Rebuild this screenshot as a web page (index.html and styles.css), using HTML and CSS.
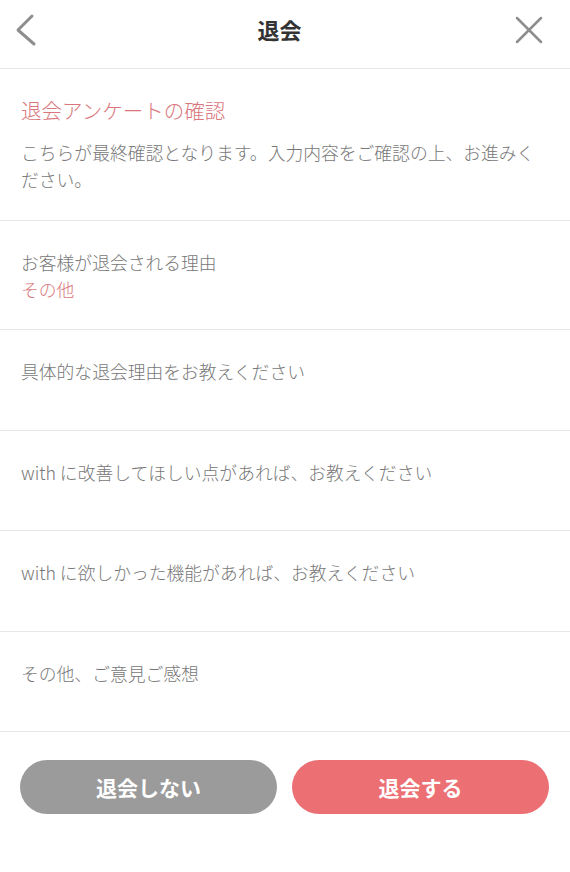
FILE: index.html
```html
<!DOCTYPE html>
<html lang="ja">
<head>
  <meta charset="UTF-8">
  <title>退会</title>
  <link rel="stylesheet" href="styles.css">
</head>
<body>
  <header class="header">
    <button class="icon-btn" aria-label="戻る">
      <svg width="22" height="34" viewBox="0 0 22 34">
        <polyline points="17,3 3,17 19,31" fill="none" stroke="#8e8e8e" stroke-width="3" stroke-linecap="round" stroke-linejoin="round"/>
      </svg>
    </button>
    <h1 class="title">退会</h1>
    <button class="icon-btn close" aria-label="閉じる">
      <svg width="30" height="30" viewBox="0 0 30 30">
        <line x1="3" y1="3" x2="27" y2="27" stroke="#8e8e8e" stroke-width="2.5" stroke-linecap="round"/>
        <line x1="27" y1="3" x2="3" y2="27" stroke="#8e8e8e" stroke-width="2.5" stroke-linecap="round"/>
      </svg>
    </button>
  </header>

  <section class="intro">
    <h2 class="intro-title">退会アンケートの確認</h2>
    <p class="intro-text">こちらが最終確認となります。入力内容をご確認の上、お進みください。</p>
  </section>

  <section class="item">
    <div class="label">お客様が退会される理由</div>
    <div class="answer">その他</div>
  </section>

  <section class="item">
    <div class="label">具体的な退会理由をお教えください</div>
    <div class="answer empty"></div>
  </section>

  <section class="item">
    <div class="label">with に改善してほしい点があれば、お教えください</div>
    <div class="answer empty"></div>
  </section>

  <section class="item">
    <div class="label">with に欲しかった機能があれば、お教えください</div>
    <div class="answer empty"></div>
  </section>

  <section class="item">
    <div class="label">その他、ご意見ご感想</div>
    <div class="answer empty"></div>
  </section>

  <div class="actions">
    <button class="btn btn-cancel">退会しない</button>
    <button class="btn btn-submit">退会する</button>
  </div>
</body>
</html>
```

FILE: styles.css
```css
body {
  margin: 0;
  background-color: #fff;
  font-family: "Noto Sans CJK JP", "Noto Sans", sans-serif;
  color: #777;
}

.header {
  height: 60px;
  display: grid;
  grid-template-columns: 1fr auto 1fr;
  align-items: center;
  padding: 0 26px 8px 15px;
  border-bottom: 1px solid #e6e6e6;
}

.icon-btn {
  background: none;
  border: none;
  padding: 0;
  display: flex;
  align-items: center;
  cursor: pointer;
}

.icon-btn.close {
  justify-self: end;
}

.title {
  margin: 0 0 2px;
  font-size: 22px;
  font-weight: bold;
  color: #333;
  line-height: 30px;
}

.intro {
  padding: 26px 21px 27px;
  border-bottom: 1px solid #e6e6e6;
}

.intro-title {
  margin: 0 0 14px;
  font-size: 20.5px;
  font-weight: 300;
  line-height: 30px;
  color: #d9777c;
}

.intro-text {
  margin: 0;
  font-size: 17.8px;
  font-weight: 300;
  line-height: 27px;
}

.item {
  padding: 28px 21px 26px;
  border-bottom: 1px solid #e6e6e6;
}

.label {
  font-size: 17.8px;
  font-weight: 300;
  line-height: 27px;
}

.answer {
  font-size: 17.8px;
  font-weight: 300;
  line-height: 27px;
  color: #d9777c;
}

.answer.empty {
  height: 18.5px;
}

.actions {
  display: flex;
  gap: 15px;
  padding: 28px 21px 0 20px;
}

.btn {
  flex: 1;
  height: 54px;
  border: none;
  border-radius: 27px;
  color: #fff;
  font-family: "Noto Sans CJK JP", "Noto Sans", sans-serif;
  font-size: 21px;
  font-weight: bold;
  cursor: pointer;
}

.btn-cancel {
  background-color: #9b9b9b;
}

.btn-submit {
  background-color: #eb6f73;
}
```
